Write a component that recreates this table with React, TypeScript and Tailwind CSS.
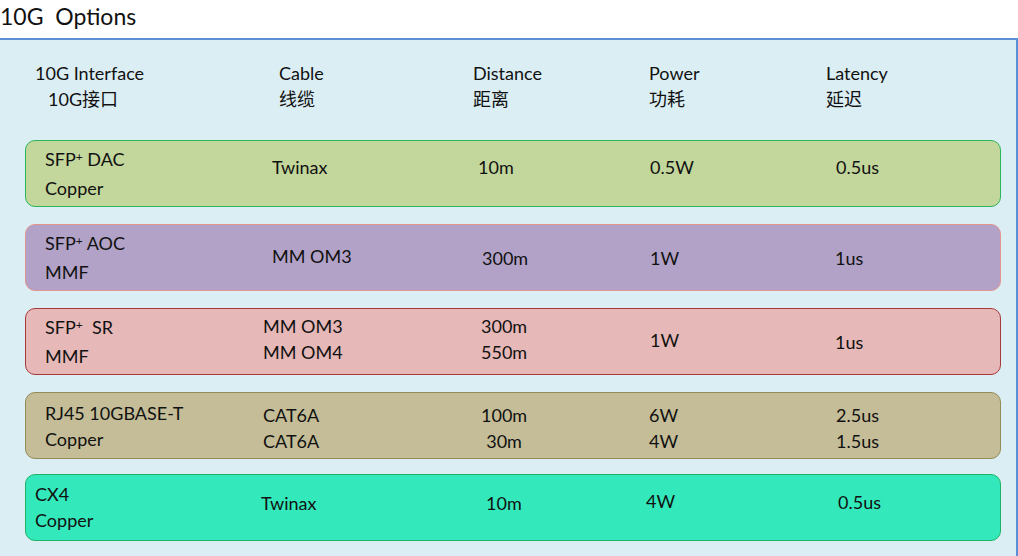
import React from "react";

type Row = {
  bg: string;
  c1: React.ReactNode;
  c1Pad: string;
  cable: string[];
  cablePad: string;
  dist: string[];
  distPad: string;
  power: string[];
  powerPad: string;
  latency: string[];
  latencyPad: string;
};

const Sfp = ({ tail }: { tail: string }) => (
  <span>
    SFP<span className="relative -top-[5px] text-[12px]">+</span>
    {tail}
  </span>
);

const rows: Row[] = [
  {
    bg: "bg-[#c3d69b] border-[#2bb55a]",
    c1: (
      <>
        <Sfp tail=" DAC" />
        <div>Copper</div>
      </>
    ),
    c1Pad: "pl-[19px] -mt-[1px]",
    cable: ["Twinax"],
    cablePad: "pl-[19px] -mt-[14px]",
    dist: ["10m"],
    distPad: "pl-[20px] -mt-[14px]",
    power: ["0.5W"],
    powerPad: "pl-[17px] -mt-[14px]",
    latency: ["0.5us"],
    latencyPad: "pl-[28px] -mt-[14px]",
  },
  {
    bg: "bg-[#b2a2c7] border-[#e39590]",
    c1: (
      <>
        <Sfp tail=" AOC" />
        <div>MMF</div>
      </>
    ),
    c1Pad: "pl-[19px]",
    cable: ["MM OM3"],
    cablePad: "pl-[19px] -mt-[3px]",
    dist: ["300m"],
    distPad: "pl-[24px]",
    power: ["1W"],
    powerPad: "pl-[17px]",
    latency: ["1us"],
    latencyPad: "pl-[27px]",
  },
  {
    bg: "bg-[#e6b8b7] border-[#a8393a]",
    c1: (
      <>
        <Sfp tail="  SR" />
        <div>MMF</div>
      </>
    ),
    c1Pad: "pl-[19px]",
    cable: ["MM OM3", "MM OM4"],
    cablePad: "pl-[10px] -mt-[6px]",
    dist: ["300m", "550m"],
    distPad: "pl-[23px] -mt-[6px]",
    power: ["1W"],
    powerPad: "pl-[17px] -mt-[3px]",
    latency: ["1us"],
    latencyPad: "pl-[27px]",
  },
  {
    bg: "bg-[#c4bd97] border-[#958b57]",
    c1: (
      <>
        <div>RJ45 10GBASE-T</div>
        <div>Copper</div>
      </>
    ),
    c1Pad: "pl-[19px]",
    cable: ["CAT6A", "CAT6A"],
    cablePad: "pl-[10px] mt-[5px]",
    dist: ["100m", "30m"],
    distPad: "pl-[23px] mt-[5px]",
    power: ["6W", "4W"],
    powerPad: "pl-[16px] mt-[5px]",
    latency: ["2.5us", "1.5us"],
    latencyPad: "pl-[28px] mt-[5px]",
  },
  {
    bg: "bg-[#33e9bb] border-[#21b365]",
    c1: (
      <>
        <div>CX4</div>
        <div>Copper</div>
      </>
    ),
    c1Pad: "pl-[9px] -mt-[1px]",
    cable: ["Twinax"],
    cablePad: "pl-[8px] -mt-[9px]",
    dist: ["10m"],
    distPad: "pl-[28px] -mt-[9px]",
    power: ["4W"],
    powerPad: "pl-[13px] -mt-[13px]",
    latency: ["0.5us"],
    latencyPad: "pl-[30px] -mt-[11px]",
  },
];

function Lines({ items, center }: { items: string[]; center?: boolean }) {
  return (
    <div className={center ? "inline-block text-center" : "inline-block"}>
      {items.map((t, i) => (
        <div key={i}>{t}</div>
      ))}
    </div>
  );
}

export default function App() {
  return (
    <div
      className="w-[1018px] h-[556px] bg-white text-[#111] overflow-hidden"
      style={{ fontFamily: "Lato, 'Noto Sans CJK SC', sans-serif" }}
    >
      <div className="h-[38px] text-[23px] leading-[32px] whitespace-pre">10G  Options</div>
      <div className="h-[518px] bg-[#dbeef4] border-t-2 border-r-2 border-[#5a8fd6] text-[18px] leading-[26px]">
        <div className="flex pt-[20px] pl-[35px]">
          <div className="w-[244px]">
            <div>10G Interface</div>
            <div className="pl-[13px]">10G接口</div>
          </div>
          <div className="w-[194px]">
            <div>Cable</div>
            <div>线缆</div>
          </div>
          <div className="w-[176px]">
            <div>Distance</div>
            <div>距离</div>
          </div>
          <div className="w-[177px]">
            <div>Power</div>
            <div>功耗</div>
          </div>
          <div>
            <div>Latency</div>
            <div>延迟</div>
          </div>
        </div>
        <div className="mt-[28px] pl-[25px] flex flex-col gap-[17px]">
          {rows.map((r, i) => (
            <div
              key={i}
              className={`w-[976px] h-[67px] rounded-[10px] border flex items-center ${r.bg} ${i === 4 ? "-mt-[2px]" : ""}`}
            >
              <div className={`w-[227px] whitespace-pre ${r.c1Pad}`}>{r.c1}</div>
              <div className={`w-[205px] ${r.cablePad}`}>
                <Lines items={r.cable} />
              </div>
              <div className={`w-[175px] ${r.distPad}`}>
                <Lines items={r.dist} center />
              </div>
              <div className={`w-[175px] ${r.powerPad}`}>
                <Lines items={r.power} />
              </div>
              <div className={`flex-1 ${r.latencyPad}`}>
                <Lines items={r.latency} />
              </div>
            </div>
          ))}
        </div>
      </div>
    </div>
  );
}
